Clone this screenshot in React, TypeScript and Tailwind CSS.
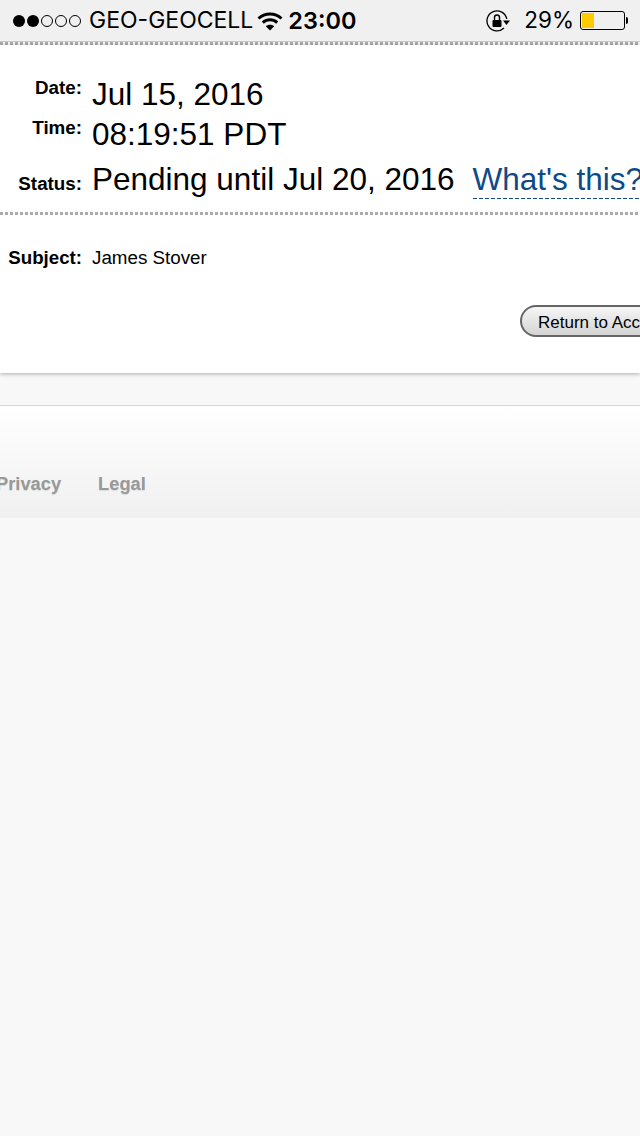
const sans = "font-['Liberation_Sans',Arial,sans-serif]"

const Dots = () => (
  <div className="flex gap-[2px]">
    <span className="h-[12px] w-[12px] rounded-full bg-black" />
    <span className="h-[12px] w-[12px] rounded-full bg-black" />
    <span className="h-[12px] w-[12px] rounded-full border border-black" />
    <span className="h-[12px] w-[12px] rounded-full border border-black" />
    <span className="h-[12px] w-[12px] rounded-full border border-black" />
  </div>
)

const Wifi = () => (
  <svg width="26" height="20" viewBox="0 0 26 20" fill="none" stroke="black" strokeWidth="3">
    <path d="M1.5 7.5C8 1.5 18 1.5 24.5 7.5" />
    <path d="M5.8 11.6C10 7.8 16 7.8 20.2 11.6" />
    <path d="M13 19.5L8.8 15.2C11.2 13.2 14.8 13.2 17.2 15.2Z" fill="black" stroke="none" />
  </svg>
)

const RotationLock = () => (
  <svg width="24" height="22" viewBox="0 0 24 22" fill="none">
    <path d="M20.8 9A10 10 0 1 0 18 18" stroke="black" strokeWidth="1.3" />
    <path d="M17 10.5H24L20.5 15Z" fill="black" />
    <rect x="6.5" y="10" width="9" height="7" rx="1" fill="black" />
    <path d="M8.5 10V7.5A2.5 2.5 0 0 1 13.5 7.5V10" stroke="black" strokeWidth="1.4" />
  </svg>
)

const Battery = () => (
  <div className="flex items-center gap-[1px]">
    <div className="h-[19px] w-[45px] rounded-[3px] border border-black p-[1px]">
      <div className="h-full w-[12px] bg-[#fdcb00]" />
    </div>
    <div className="h-[7px] w-[2px] rounded-r-full bg-black" />
  </div>
)

const StatusBar = () => (
  <div className={`flex h-[41px] items-center bg-[#f0f0f0] pl-[13px] pr-[12px] text-black ${sans}`}>
    <Dots />
    <span className="ml-[8px] text-[23px] leading-none font-['Inter',sans-serif]">GEO-GEOCELL</span>
    <span className="ml-[4px]"><Wifi /></span>
    <span className="ml-[5px] text-[23.5px] leading-none font-semibold font-['Inter',sans-serif]">23:00</span>
    <div className="ml-auto flex items-center">
      <RotationLock />
      <span className="ml-[14px] text-[22.5px] leading-none font-['Inter',sans-serif]">29%</span>
      <span className="ml-[6px]"><Battery /></span>
    </div>
  </div>
)

const Dotted = () => <div className="h-[3px] bg-[repeating-linear-gradient(90deg,#ababab_0,#ababab_3px,transparent_3px,transparent_5px)]" />

const Row = ({ label, value, className, children }: { label: string; value: string; className: string; children?: React.ReactNode }) => (
  <div className={`flex ${className}`}>
    <span className="w-[82px] shrink-0 text-right text-[18.8px] font-bold leading-none text-black">{label}</span>
    <span className="ml-[10px] whitespace-nowrap text-[31.5px] leading-none text-black">{value}</span>
    {children}
  </div>
)

export default function App() {
  return (
    <div className={`flex h-[1136px] w-[640px] flex-col overflow-hidden bg-[#f8f8f8] ${sans}`}>
      <StatusBar />
      <div className="h-[1px] bg-[#c9c9c9]" />
      <Dotted />
      <div className="h-[328px] bg-white shadow-[0_1px_4px_rgba(0,0,0,0.3)]">
        <div className="pt-[34px]">
          <Row label="Date:" value="Jul 15, 2016" className="h-[40px] items-start" />
          <Row label="Time:" value="08:19:51 PDT" className="h-[42px] items-start" />
          <Row label="Status:" value="Pending until Jul 20, 2016" className="h-[51px] items-baseline">
            <span className="ml-[18px] whitespace-nowrap bg-[repeating-linear-gradient(90deg,#0f4a87_0,#0f4a87_4px,transparent_4px,transparent_6px)] bg-[length:100%_1px] bg-bottom bg-no-repeat pb-[2px] text-[31.5px] leading-[36px] text-[#0f4a87]">What's this?</span>
          </Row>
        </div>
        <Dotted />
        <div className="flex items-baseline pt-[34px]">
          <span className="w-[82px] shrink-0 text-right text-[18.7px] font-bold leading-none text-black">Subject:</span>
          <span className="ml-[10px] text-[18.8px] leading-none text-black">James Stover</span>
        </div>
        <div className="mt-[37px] flex justify-start pl-[520px]">
          <div className="flex h-[32px] w-[200px] shrink-0 items-center whitespace-nowrap rounded-full border-2 border-[#666666] bg-gradient-to-b from-[#f6f6f6] to-[#d4d4d4] pl-[16px] pt-[3px] text-[17px] text-black">
            Return to Account
          </div>
        </div>
      </div>
      <div className="mt-[32px] h-[1px] bg-[#d6d6d6]" />
      <div className="flex h-[112px] items-start gap-[37px] bg-gradient-to-b from-white to-[#f0f0f0] pt-[69px] text-[18.3px] font-bold leading-none text-[#999999] [text-shadow:0_1px_1px_rgba(0,0,0,0.1)]">
        <span className="ml-[-4px]">Privacy</span>
        <span>Legal</span>
      </div>
    </div>
  )
}
